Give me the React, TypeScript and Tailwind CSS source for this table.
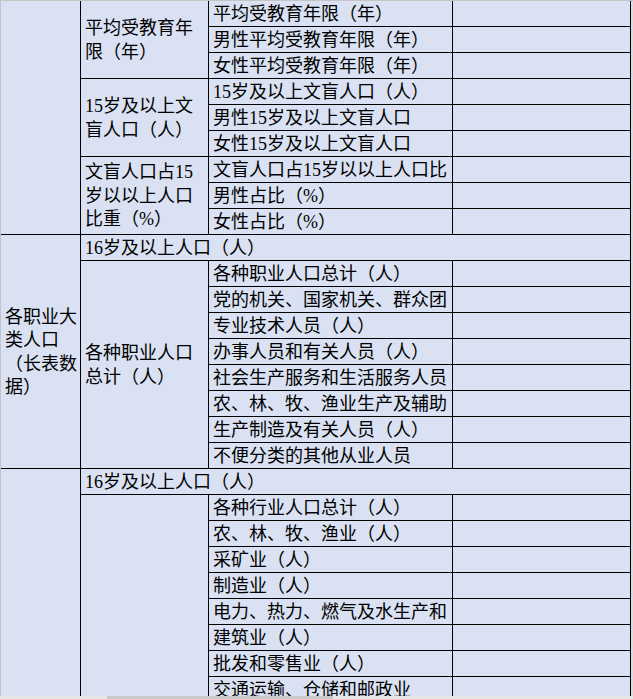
import React from "react";

type Cell = { cls: string; lines?: string[]; text?: string };

const base =
  "bg-[#d9e1f2] flex items-center overflow-hidden whitespace-nowrap pl-[4px] pt-[2px] text-[18px] leading-[23.5px] text-black";

const cells: Cell[] = [
  // section 1
  { cls: "row-span-9" },
  { cls: "row-span-3", lines: ["平均受教育年", "限（年）"] },
  { cls: "", text: "平均受教育年限（年）" },
  { cls: "" },
  { cls: "", text: "男性平均受教育年限（年）" },
  { cls: "" },
  { cls: "", text: "女性平均受教育年限（年）" },
  { cls: "" },
  { cls: "row-span-3", lines: ["15岁及以上文", "盲人口（人）"] },
  { cls: "", text: "15岁及以上文盲人口（人）" },
  { cls: "" },
  { cls: "", text: "男性15岁及以上文盲人口" },
  { cls: "" },
  { cls: "", text: "女性15岁及以上文盲人口" },
  { cls: "" },
  { cls: "row-span-3", lines: ["文盲人口占15", "岁以以上人口", "比重（%）"] },
  { cls: "", text: "文盲人口占15岁以以上人口比" },
  { cls: "" },
  { cls: "", text: "男性占比（%）" },
  { cls: "" },
  { cls: "", text: "女性占比（%）" },
  { cls: "" },
  // section 2
  { cls: "row-span-9", lines: ["各职业大", "类人口", "（长表数", "据）"] },
  { cls: "col-span-3", text: "16岁及以上人口（人）" },
  { cls: "row-span-8", lines: ["各种职业人口", "总计（人）"] },
  { cls: "", text: "各种职业人口总计（人）" },
  { cls: "" },
  { cls: "", text: "党的机关、国家机关、群众团" },
  { cls: "" },
  { cls: "", text: "专业技术人员（人）" },
  { cls: "" },
  { cls: "", text: "办事人员和有关人员（人）" },
  { cls: "" },
  { cls: "", text: "社会生产服务和生活服务人员" },
  { cls: "" },
  { cls: "", text: "农、林、牧、渔业生产及辅助" },
  { cls: "" },
  { cls: "", text: "生产制造及有关人员（人）" },
  { cls: "" },
  { cls: "", text: "不便分类的其他从业人员" },
  { cls: "" },
  // section 3
  { cls: "row-span-9" },
  { cls: "col-span-3", text: "16岁及以上人口（人）" },
  { cls: "row-span-8" },
  { cls: "", text: "各种行业人口总计（人）" },
  { cls: "" },
  { cls: "", text: "农、林、牧、渔业（人）" },
  { cls: "" },
  { cls: "", text: "采矿业（人）" },
  { cls: "" },
  { cls: "", text: "制造业（人）" },
  { cls: "" },
  { cls: "", text: "电力、热力、燃气及水生产和" },
  { cls: "" },
  { cls: "", text: "建筑业（人）" },
  { cls: "" },
  { cls: "", text: "批发和零售业（人）" },
  { cls: "" },
  { cls: "", text: "交通运输、仓储和邮政业" },
  { cls: "" },
];

export default function App() {
  return (
    <div
      className="relative w-[633px] h-[699px] overflow-hidden bg-white flex flex-col"
      style={{ fontFamily: '"Liberation Serif", "Noto Sans CJK SC", serif' }}
    >
      <div className="h-px shrink-0 bg-[#c4c4c4]" />
      <div className="flex flex-1 min-h-0">
        <div className="w-px shrink-0 bg-[#c4c4c4]" />
        <div className="grid grid-cols-[79px_127px_243px_177px] grid-rows-[repeat(27,25px)] gap-px bg-black border-r border-black self-start">
          {cells.map((c, i) => (
            <div key={i} className={`${base} ${c.cls}`}>
              {c.lines ? (
                <div className="flex flex-col">
                  {c.lines.map((l, j) => (
                    <span key={j}>{l}</span>
                  ))}
                </div>
              ) : (
                c.text ?? ""
              )}
            </div>
          ))}
        </div>
        <div className="w-[2px] shrink-0 bg-[#dcdcdc]" />
      </div>
      <div className="absolute left-0 right-0 bottom-0 h-[3px] bg-[#e6e6e6] flex">
        <div className="w-[107px]" />
        <div className="w-[226px] bg-[#cacaca]" />
      </div>
    </div>
  );
}
